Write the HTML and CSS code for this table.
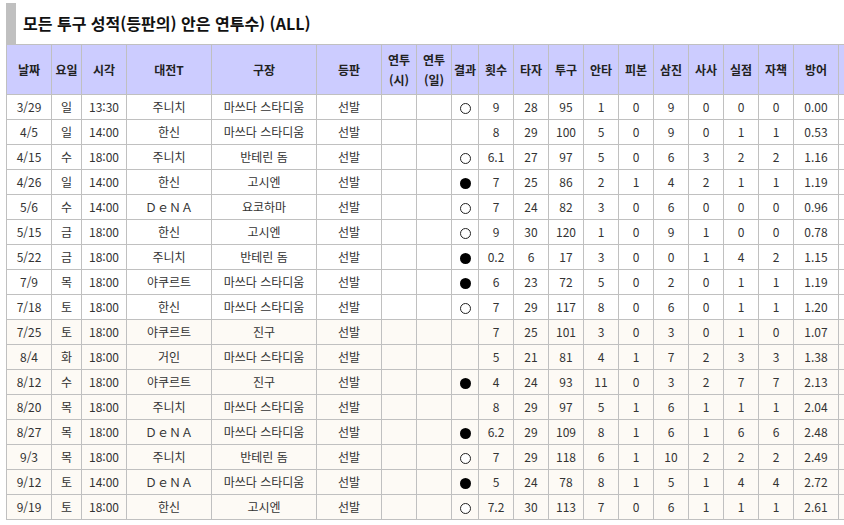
FILE: index.html
```html
<!DOCTYPE html>
<html lang="ko">
<head>
<meta charset="utf-8">
<title>모든 투구 성적</title>
<link rel="stylesheet" href="styles.css">
</head>
<body>
<div class="wrap">
  <h2 class="title">모든 투구 성적(등판의) 안은 연투수) (ALL)</h2>
  <table class="stats">
    <colgroup>
      <col style="width:45px"><col style="width:30px"><col style="width:45px"><col style="width:85px"><col style="width:105px"><col style="width:65px"><col style="width:35px"><col style="width:35px"><col style="width:27px"><col style="width:35px"><col style="width:35px"><col style="width:35px"><col style="width:35px"><col style="width:35px"><col style="width:35px"><col style="width:35px"><col style="width:35px"><col style="width:35px"><col style="width:45px"><col style="width:45px">
    </colgroup>
    <thead>
      <tr>
        <th>날짜</th><th>요일</th><th>시각</th><th>대전T</th><th>구장</th><th>등판</th><th>연투<br>(시)</th><th>연투<br>(일)</th><th>결과</th><th>횟수</th><th>타자</th><th>투구</th><th>안타</th><th>피본</th><th>삼진</th><th>사사</th><th>실점</th><th>자책</th><th>방어</th><th></th>
      </tr>
    </thead>
    <tbody>
      <tr><td>3/29</td><td>일</td><td>13:30</td><td>주니치</td><td>마쓰다 스타디움</td><td>선발</td><td></td><td></td><td><span class="win"></span></td><td>9</td><td>28</td><td>95</td><td>1</td><td>0</td><td>9</td><td>0</td><td>0</td><td>0</td><td>0.00</td><td></td></tr>
      <tr><td>4/5</td><td>일</td><td>14:00</td><td>한신</td><td>마쓰다 스타디움</td><td>선발</td><td></td><td></td><td></td><td>8</td><td>29</td><td>100</td><td>5</td><td>0</td><td>9</td><td>0</td><td>1</td><td>1</td><td>0.53</td><td></td></tr>
      <tr><td>4/15</td><td>수</td><td>18:00</td><td>주니치</td><td>반테린 돔</td><td>선발</td><td></td><td></td><td><span class="win"></span></td><td>6.1</td><td>27</td><td>97</td><td>5</td><td>0</td><td>6</td><td>3</td><td>2</td><td>2</td><td>1.16</td><td></td></tr>
      <tr><td>4/26</td><td>일</td><td>14:00</td><td>한신</td><td>고시엔</td><td>선발</td><td></td><td></td><td><span class="loss"></span></td><td>7</td><td>25</td><td>86</td><td>2</td><td>1</td><td>4</td><td>2</td><td>1</td><td>1</td><td>1.19</td><td></td></tr>
      <tr><td>5/6</td><td>수</td><td>14:00</td><td>ＤｅＮＡ</td><td>요코하마</td><td>선발</td><td></td><td></td><td><span class="win"></span></td><td>7</td><td>24</td><td>82</td><td>3</td><td>0</td><td>6</td><td>0</td><td>0</td><td>0</td><td>0.96</td><td></td></tr>
      <tr><td>5/15</td><td>금</td><td>18:00</td><td>한신</td><td>고시엔</td><td>선발</td><td></td><td></td><td><span class="win"></span></td><td>9</td><td>30</td><td>120</td><td>1</td><td>0</td><td>9</td><td>1</td><td>0</td><td>0</td><td>0.78</td><td></td></tr>
      <tr><td>5/22</td><td>금</td><td>18:00</td><td>주니치</td><td>반테린 돔</td><td>선발</td><td></td><td></td><td><span class="loss"></span></td><td>0.2</td><td>6</td><td>17</td><td>3</td><td>0</td><td>0</td><td>1</td><td>4</td><td>2</td><td>1.15</td><td></td></tr>
      <tr><td>7/9</td><td>목</td><td>18:00</td><td>야쿠르트</td><td>마쓰다 스타디움</td><td>선발</td><td></td><td></td><td><span class="loss"></span></td><td>6</td><td>23</td><td>72</td><td>5</td><td>0</td><td>2</td><td>0</td><td>1</td><td>1</td><td>1.19</td><td></td></tr>
      <tr><td>7/18</td><td>토</td><td>18:00</td><td>한신</td><td>마쓰다 스타디움</td><td>선발</td><td></td><td></td><td><span class="win"></span></td><td>7</td><td>29</td><td>117</td><td>8</td><td>0</td><td>6</td><td>0</td><td>1</td><td>1</td><td>1.20</td><td></td></tr>
      <tr class="alt"><td>7/25</td><td>토</td><td>18:00</td><td>야쿠르트</td><td>진구</td><td>선발</td><td></td><td></td><td></td><td>7</td><td>25</td><td>101</td><td>3</td><td>0</td><td>3</td><td>0</td><td>1</td><td>0</td><td>1.07</td><td></td></tr>
      <tr class="alt"><td>8/4</td><td>화</td><td>18:00</td><td>거인</td><td>마쓰다 스타디움</td><td>선발</td><td></td><td></td><td></td><td>5</td><td>21</td><td>81</td><td>4</td><td>1</td><td>7</td><td>2</td><td>3</td><td>3</td><td>1.38</td><td></td></tr>
      <tr class="alt"><td>8/12</td><td>수</td><td>18:00</td><td>야쿠르트</td><td>진구</td><td>선발</td><td></td><td></td><td><span class="loss"></span></td><td>4</td><td>24</td><td>93</td><td>11</td><td>0</td><td>3</td><td>2</td><td>7</td><td>7</td><td>2.13</td><td></td></tr>
      <tr class="alt"><td>8/20</td><td>목</td><td>18:00</td><td>주니치</td><td>마쓰다 스타디움</td><td>선발</td><td></td><td></td><td></td><td>8</td><td>29</td><td>97</td><td>5</td><td>1</td><td>6</td><td>1</td><td>1</td><td>1</td><td>2.04</td><td></td></tr>
      <tr class="alt"><td>8/27</td><td>목</td><td>18:00</td><td>ＤｅＮＡ</td><td>마쓰다 스타디움</td><td>선발</td><td></td><td></td><td><span class="loss"></span></td><td>6.2</td><td>29</td><td>109</td><td>8</td><td>1</td><td>6</td><td>1</td><td>6</td><td>6</td><td>2.48</td><td></td></tr>
      <tr class="alt"><td>9/3</td><td>목</td><td>18:00</td><td>주니치</td><td>반테린 돔</td><td>선발</td><td></td><td></td><td><span class="win"></span></td><td>7</td><td>29</td><td>118</td><td>6</td><td>1</td><td>10</td><td>2</td><td>2</td><td>2</td><td>2.49</td><td></td></tr>
      <tr class="alt"><td>9/12</td><td>토</td><td>14:00</td><td>ＤｅＮＡ</td><td>마쓰다 스타디움</td><td>선발</td><td></td><td></td><td><span class="loss"></span></td><td>5</td><td>24</td><td>78</td><td>8</td><td>1</td><td>5</td><td>1</td><td>4</td><td>4</td><td>2.72</td><td></td></tr>
      <tr class="alt"><td>9/19</td><td>토</td><td>18:00</td><td>한신</td><td>고시엔</td><td>선발</td><td></td><td></td><td><span class="win"></span></td><td>7.2</td><td>30</td><td>113</td><td>7</td><td>0</td><td>6</td><td>1</td><td>1</td><td>1</td><td>2.61</td><td></td></tr>
    </tbody>
  </table>
</div>
</body>
</html>
```

FILE: styles.css
```css
html, body {
  margin: 0;
  padding: 0;
  background: #fff;
  overflow: hidden;
}
body {
  font-family: "Noto Sans CJK KR", "Noto Sans", sans-serif;
  color: #333;
}
.wrap {
  padding: 3px 0 0 6px;
}
.title {
  margin: 0;
  height: 41px;
  box-sizing: border-box;
  border-left: 10px solid #c0c0c0;
  padding-left: 7px;
  font-size: 16px;
  font-weight: 700;
  line-height: 40px;
  color: #111;
}
.stats {
  border-collapse: collapse;
  table-layout: fixed;
  width: 877px;
  font-size: 12px;
}
.stats th, .stats td {
  border: 1px solid #c0c0c0;
  text-align: center;
  padding: 0;
  white-space: nowrap;
  overflow: hidden;
}
.stats th {
  background: #ccccff;
  height: 49px;
  font-weight: 700;
  line-height: 20px;
  color: #222;
}
.stats tbody tr {
  height: 25px;
}
.stats td {
  line-height: 16px;
}
.stats tr.alt td {
  background: #fdfaf5;
}
.win, .loss {
  display: inline-block;
  width: 11px;
  height: 11px;
  box-sizing: border-box;
  border-radius: 50%;
  vertical-align: middle;
}
.win {
  border: 1px solid #222;
  background: #fff;
}
.loss {
  background: #000;
}
```
